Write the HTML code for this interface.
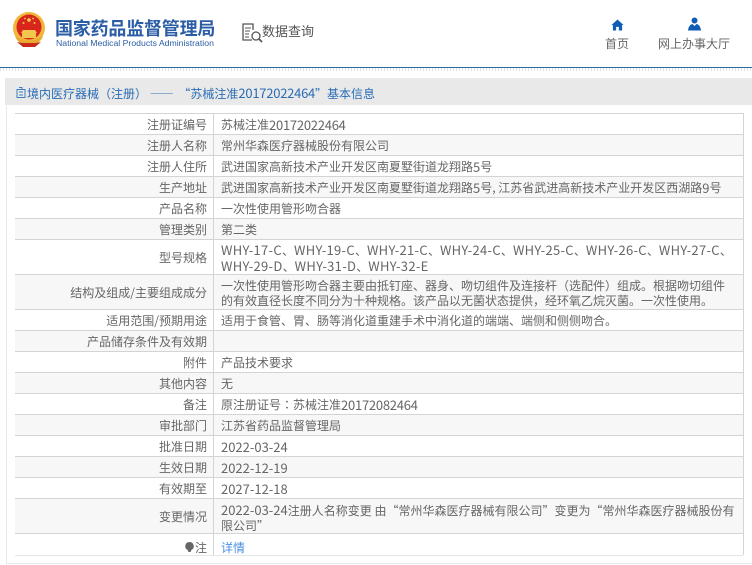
<!DOCTYPE html>
<html lang="zh-CN"><head><meta charset="utf-8"><title>基本信息</title>
<style>
html,body{margin:0;padding:0;background:#fff}
body{width:752px;height:565px;position:relative;overflow:hidden;font-family:"Liberation Sans","Noto Sans CJK SC",sans-serif;font-size:12px;color:#666}
.a{position:absolute;white-space:nowrap}
.cjk{font-family:"Noto Sans CJK SC",sans-serif}
.r{position:absolute;left:15px;width:728px;border-top:1px solid #d4d4d4;box-sizing:border-box}
.r.s{background:#f7f7f7}
.l{position:absolute;right:536px;top:1px;bottom:-1px;display:flex;align-items:center;white-space:nowrap;color:#666;font-family:"Noto Sans CJK SC",sans-serif;font-size:12px;line-height:12px}
.v{position:absolute;left:206px;top:1px;bottom:-1px;display:flex;align-items:center;white-space:nowrap;color:#666;font-family:"Noto Sans CJK SC",sans-serif;font-size:12px;line-height:12px}
.v span{display:block;line-height:15px}
i{font-style:normal;font-size:13px}
i.w{letter-spacing:.3px}
i.n{letter-spacing:-.25px}
b{font-weight:400;font-family:"Noto Sans CJK TC",sans-serif}
</style></head><body>

<svg class="a" style="left:12px;top:12px" width="34" height="37" viewBox="0 0 34 37">
<circle cx="17" cy="16" r="16" fill="#f0b73c"/>
<circle cx="17" cy="15" r="12.500" fill="#d8261c"/>
<path d="M10 21h14v5H10z" fill="#f3c64e"/>
<path d="M9 21h16l-2-3H11z" fill="#f3c64e"/>
<path d="M3 24c2 6 8 10 14 10s12-4 14-10l-5 3-9 2-9-2z" fill="#e8a92f"/>
<path d="M5 30l6 5h12l6-5-5 1H10z" fill="#c92a1c"/>
<circle cx="17" cy="8" r="1.800" fill="#f6d050"/><circle cx="11.500" cy="11" r="1" fill="#f6d050"/><circle cx="22.500" cy="11" r="1" fill="#f6d050"/><circle cx="13" cy="6.500" r=".9" fill="#f6d050"/><circle cx="21" cy="6.500" r=".9" fill="#f6d050"/>
</svg>
<div class="a cjk" style="left:55px;top:18px;font-size:18px;line-height:20px;font-weight:700;color:#2a5da6;letter-spacing:-.2px">国家药品监督管理局</div>
<div class="a" style="left:56px;top:38px;font-size:8.700px;line-height:11px;color:#2a5da6">National Medical Products Administration</div>

<svg class="a" style="left:241px;top:22px" width="22" height="21" viewBox="0 0 22 21" fill="none" stroke="#555" stroke-width="1.300">
<path d="M11 18H2V2h10v6"/><path d="M4 6h6M4 9h5M4 12h4M4 15h4" stroke-width="1"/><circle cx="15" cy="14" r="4"/><path d="M18 17l3 3" stroke-width="1.800"/>
</svg>
<div class="a cjk" style="left:262px;top:21px;font-size:13px;line-height:20px;color:#555">数据查询</div>

<svg class="a" style="left:611px;top:19px" width="13" height="12" viewBox="0 0 13 13"><path d="M6.500 .5L13 6.500h-1.500V12.500H8V8.500H5V12.500H1.500V6.500H0z" fill="#0f5cb4"/></svg>
<div class="a cjk" style="left:605px;top:36px;line-height:16px;font-size:12px;color:#666">首页</div>
<svg class="a" style="left:688px;top:17px" width="13" height="14" viewBox="0 0 13 14"><circle cx="6.500" cy="3.500" r="3" fill="#0f5cb4"/><path d="M0 13.500c.5-4 2-6 4.500-6.500l2 2 2-2c2.500.5 4 2.500 4.500 6.500z" fill="#0f5cb4"/></svg>
<div class="a cjk" style="left:658px;top:36px;line-height:16px;font-size:12px;color:#666">网上办事大厅</div>

<div class="a" style="left:0;top:67px;width:752px;height:1px;background:#2a6aa5"></div>
<div class="a" style="left:0;top:68px;width:752px;height:3px;background:repeating-linear-gradient(90deg,#e4e4e4 0 1px,#fff 1px 3px)"></div>

<div class="a" style="left:5px;top:78px;width:747px;height:27px;background:#e9e9e9"></div>
<div class="a" style="left:6px;top:105px;width:746px;height:459px;background:#fff;border-bottom:1px solid #e9e9e9;border-left:1px solid #e9e9e9;box-sizing:border-box"></div>
<svg class="a" style="left:16px;top:86px" width="10" height="13" viewBox="0 0 10 13" fill="none" stroke="#3f7fc0" stroke-width="1"><path d="M1 3.500h8v8H1zM3 1.500h3v2M3 6h4M3 9h4"/></svg>
<div class="a cjk" style="left:27px;top:85px;font-size:12px;line-height:16px;color:#2a6db5">境内医疗器械（注册）&nbsp;——&nbsp;<span style="margin-left:2px">“苏械注准<i class="n">20172022464</i>”基本信息</span></div>

<div class="r" style="top:113px;height:21px"><div class="l">注册证编号</div><div class="v">苏械注准<i class="n">20172022464</i></div></div>
<div class="r s" style="top:134px;height:21px"><div class="l">注册人名称</div><div class="v">常州华森医疗器械股份有限公司</div></div>
<div class="r" style="top:155px;height:21px"><div class="l">注册人住所</div><div class="v">武进国家高新技术产业开发区南夏墅街道龙翔路<i>5</i>号</div></div>
<div class="r s" style="top:176px;height:21px"><div class="l">生产地址</div><div class="v">武进国家高新技术产业开发区南夏墅街道龙翔路<i>5</i>号, 江苏省武进高新技术产业开发区西湖路<i>9</i>号</div></div>
<div class="r" style="top:197px;height:21px"><div class="l">产品名称</div><div class="v">一次性使用管形吻合器</div></div>
<div class="r s" style="top:218px;height:21px"><div class="l">管理类别</div><div class="v">第二类</div></div>
<div class="r" style="top:239px;height:35px"><div class="l">型号规格</div><div class="v"><span><i class="w">WHY-17-C</i>、<i class="w">WHY-19-C</i>、<i class="w">WHY-21-C</i>、<i class="w">WHY-24-C</i>、<i class="w">WHY-25-C</i>、<i class="w">WHY-26-C</i>、<i class="w">WHY-27-C</i>、<br><i class="w">WHY-29-D</i>、<i class="w">WHY-31-D</i>、<i class="w">WHY-32-E</i></span></div></div>
<div class="r s" style="top:274px;height:35px"><div class="l">结构及组成/主要组成成分</div><div class="v"><span>一次性使用管形吻合器主要由抵钉座、器身、吻切组件及连接杆（选配件）组成。根据吻切组件<br>的有效直径长度不同分为十种规格。该产品以无菌状态提供<b>，</b>经环氧乙烷灭菌。一次性使用。</span></div></div>
<div class="r" style="top:309px;height:21px"><div class="l">适用范围/预期用途</div><div class="v">适用于食管、胃、肠等消化道重建手术中消化道的端端、端侧和侧侧吻合。</div></div>
<div class="r s" style="top:330px;height:21px"><div class="l">产品储存条件及有效期</div></div>
<div class="r" style="top:351px;height:21px"><div class="l">附件</div><div class="v">产品技术要求</div></div>
<div class="r s" style="top:372px;height:21px"><div class="l">其他内容</div><div class="v">无</div></div>
<div class="r" style="top:393px;height:21px"><div class="l">备注</div><div class="v">原注册证号<b>：</b>苏械注准<i class="n">20172082464</i></div></div>
<div class="r s" style="top:414px;height:21px"><div class="l">审批部门</div><div class="v">江苏省药品监督管理局</div></div>
<div class="r" style="top:435px;height:21px"><div class="l">批准日期</div><div class="v"><i>2022-03-24</i></div></div>
<div class="r s" style="top:456px;height:21px"><div class="l">生效日期</div><div class="v"><i>2022-12-19</i></div></div>
<div class="r" style="top:477px;height:21px"><div class="l">有效期至</div><div class="v"><i>2027-12-18</i></div></div>
<div class="r s" style="top:498px;height:35px"><div class="l">变更情况</div><div class="v"><span><i>2022-03-24</i>注册人名称变更 由“常州华森医疗器械有限公司”变更为“常州华森医疗器械股份有<br>限公司”</span></div></div>
<div class="r" style="top:533px;height:23px;border-bottom:1px solid #e6e6e6"><div class="l" style="top:3px;bottom:-3px"><svg width="9" height="11" viewBox="0 0 9 11" style="margin-right:1px"><path d="M4.500 0a4.200 4.200 0 0 1 2 7.900L5.500 10h-2L2.500 7.900A4.200 4.200 0 0 1 4.500 0z" fill="#666"/></svg>注</div><div class="v" style="color:#4a90e2;font-size:12px;top:3px;bottom:-3px">详情</div></div>
<div class="a" style="left:213px;top:113px;width:1px;height:442px;background:#d4d4d4"></div>
<div class="a" style="left:743px;top:113px;width:1px;height:442px;background:#d4d4d4"></div>
</body></html>
